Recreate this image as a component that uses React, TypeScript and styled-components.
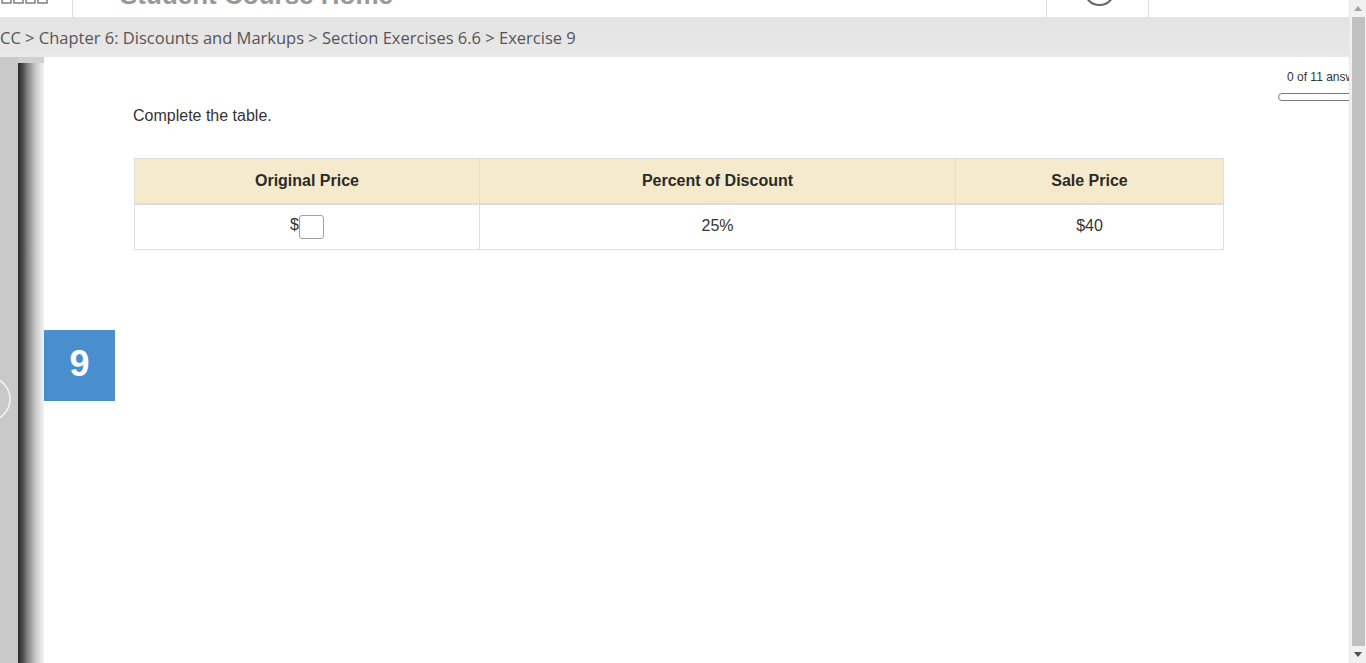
import React from "react";
import styled, { createGlobalStyle } from "styled-components";

const Global = createGlobalStyle`
  html, body { margin: 0; padding: 0; height: 100%; overflow: hidden; background: #fff; }
  #root { height: 100%; }
  * { box-sizing: border-box; }
`;

const Page = styled.div`
  display: flex;
  width: 1366px;
  height: 663px;
  overflow: hidden;
`;

const Main = styled.div`
  flex: 1;
  display: flex;
  flex-direction: column;
  min-width: 0;
`;

const TopBar = styled.div`
  height: 17px;
  display: flex;
  background: #fff;
  overflow: hidden;
`;

const TopSection = styled.div<{ $w: number }>`
  width: ${(p) => p.$w}px;
  flex-shrink: 0;
  border-right: 1px solid #dcdcdc;
  overflow: hidden;
  display: flex;
  align-items: flex-start;
`;

const LastSection = styled.div`
  flex: 1;
`;

const Title = styled.div`
  margin-top: -20px;
  margin-left: 47px;
  font-family: "Liberation Sans", Arial, sans-serif;
  font-weight: bold;
  font-size: 26px;
  line-height: 30px;
  color: #999;
  white-space: nowrap;
`;

const Crumbs = styled.div`
  height: 40px;
  background: linear-gradient(#e3e3e3, #e8e8e8);
  display: flex;
  align-items: center;
  font-family: "Open Sans", sans-serif;
  font-size: 16.5px;
  color: #555;
  white-space: nowrap;
  overflow: hidden;
  padding-top: 1px;
`;

const Body = styled.div`
  flex: 1;
  display: flex;
  min-height: 0;
`;

const Rail = styled.div`
  width: 18px;
  background: #c9c9c9;
  display: flex;
  flex-direction: column;
  padding-top: 315px;
`;

const Shadow = styled.div`
  width: 26px;
  background: linear-gradient(90deg, #2a2a2a 0px, #444 4px, #888 10px, #c4c4c4 17px, #e6e6e6 23px, #f2f2f2 26px);
  border-top: 6px solid #d0d0d0;
`;

const Content = styled.div`
  flex: 1;
  background: #fff;
  display: grid;
  grid-template-columns: 71px 1fr 71px;
`;

const BadgeCol = styled.div`
  padding-top: 273px;
`;

const Badge = styled.div`
  width: 71px;
  height: 71px;
  background: #4a8fcd;
  color: #fff;
  font-family: "Liberation Sans", Arial, sans-serif;
  font-weight: bold;
  font-size: 36px;
  display: flex;
  align-items: center;
  justify-content: center;
  padding-bottom: 4px;
`;

const Question = styled.div`
  padding: 50px 0 0 18px;
  font-family: "Liberation Sans", Arial, sans-serif;
  color: #333;
`;

const Prompt = styled.div`
  font-size: 16px;
  line-height: 18px;
  margin-bottom: 33px;
`;

const Table = styled.table`
  border-collapse: collapse;
  width: 1090px;
  margin-left: 1px;
  font-size: 16px;
`;

const Th = styled.th<{ $w: number }>`
  width: ${(p) => p.$w}px;
  height: 45px;
  background: #f6eacc;
  border: 1px solid #dedede;
  border-bottom: 2px solid #dedede;
  font-weight: bold;
  color: #2a2a2a;
  text-align: center;
  padding: 0;
`;

const Td = styled.td`
  height: 46px;
  border: 1px solid #dedede;
  text-align: center;
  color: #333;
  padding: 0 0 2px;
`;

const Blank = styled.span`
  display: inline-block;
  width: 25px;
  height: 24px;
  border: 1px solid #a0a0a0;
  border-radius: 3px;
  vertical-align: middle;
  margin-top: 3px;
  background: #fff;
`;

const Status = styled.div`
  overflow: hidden;
  padding-top: 13px;
  font-family: "Liberation Sans", Arial, sans-serif;
`;

const StatusText = styled.div`
  font-size: 12px;
  color: #333;
  white-space: nowrap;
  padding-left: 9px;
  line-height: 14px;
`;

const Progress = styled.div`
  margin-top: 9px;
  width: 120px;
  height: 8px;
  border: 1px solid #7a7a7a;
  border-radius: 4px;
`;

const Scrollbar = styled.div`
  width: 17px;
  background: #f1f1f1;
  display: flex;
  flex-direction: column;
  border-left: 1px solid #e8e8e8;
`;

const Arrow = styled.div`
  height: 17px;
  display: flex;
  align-items: center;
  justify-content: center;
`;

const Thumb = styled.div`
  flex: 1;
  margin: 0 1px 0 2px;
  background: #c1c1c1;
`;

export default function App() {
  return (
    <>
      <Global />
      <Page>
        <Main>
          <TopBar>
            <TopSection $w={73}>
              <svg width="56" height="17" viewBox="0 0 56 17">
                {[2, 14, 26, 38].map((x) => (
                  <rect key={x} x={x} y={-8} width={9} height={11} fill="none" stroke="#888" strokeWidth="1.6" />
                ))}
              </svg>
            </TopSection>
            <TopSection $w={974}>
              <Title>Student Course Home</Title>
            </TopSection>
            <TopSection $w={102}>
              <svg width="102" height="17" viewBox="0 0 102 17">
                <circle cx="53" cy="-10" r="15" fill="none" stroke="#666" strokeWidth="2" />
              </svg>
            </TopSection>
            <LastSection />
          </TopBar>
          <Crumbs>CC &gt; Chapter 6: Discounts and Markups &gt; Section Exercises 6.6 &gt; Exercise 9</Crumbs>
          <Body>
            <Rail>
              <svg width="18" height="54" viewBox="0 0 18 54">
                <circle cx="-12" cy="27" r="22" fill="none" stroke="#f4f4f4" strokeWidth="1.5" />
              </svg>
            </Rail>
            <Shadow />
            <Content>
              <BadgeCol>
                <Badge>9</Badge>
              </BadgeCol>
              <Question>
                <Prompt>Complete the table.</Prompt>
                <Table>
                  <thead>
                    <tr>
                      <Th $w={345}>Original Price</Th>
                      <Th $w={476}>Percent of Discount</Th>
                      <Th $w={268}>Sale Price</Th>
                    </tr>
                  </thead>
                  <tbody>
                    <tr>
                      <Td>
                        $<Blank />
                      </Td>
                      <Td>25%</Td>
                      <Td>$40</Td>
                    </tr>
                  </tbody>
                </Table>
              </Question>
              <Status>
                <StatusText>0 of 11 answered</StatusText>
                <Progress />
              </Status>
            </Content>
          </Body>
        </Main>
        <Scrollbar>
          <Arrow>
            <svg width="8" height="5" viewBox="0 0 8 5">
              <path d="M0 5 L4 0 L8 5 Z" fill="#a3a3a3" />
            </svg>
          </Arrow>
          <Thumb />
          <Arrow>
            <svg width="8" height="5" viewBox="0 0 8 5">
              <path d="M0 0 L4 5 L8 0 Z" fill="#505050" />
            </svg>
          </Arrow>
        </Scrollbar>
      </Page>
    </>
  );
}
